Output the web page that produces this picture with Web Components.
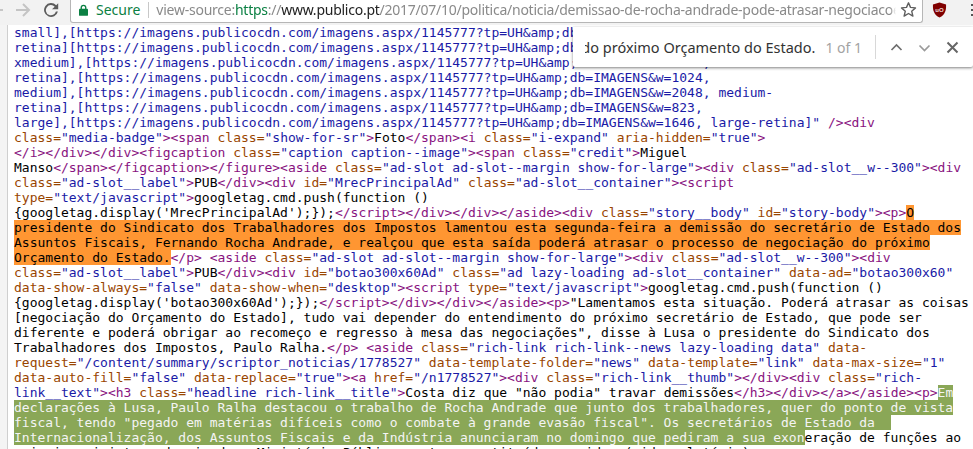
<!DOCTYPE html>
<html>
<head>
<meta charset="utf-8">
<title>view-source</title>
<style>
html, body { margin: 0; padding: 0; height: 100%; overflow: hidden; background: #fff; }
body { display: flex; flex-direction: column; height: 449px; }
</style>
</head>
<body>
<browser-toolbar url-scheme="view-source:" url-secure="https" url-path="/2017/07/10/politica/noticia/demissao-de-rocha-andrade-pode-atrasar-negociacoes"></browser-toolbar>
<source-view></source-view>
<find-bar query="do próximo Orçamento do Estado." count="1 of 1"></find-bar>

<script>
class BrowserToolbar extends HTMLElement {
    constructor() {
        super();
        this.attachShadow({ mode: 'open' });
        const CSS = `
        :host {
            display: flex;
            flex: none;
            height: 28px;
            box-sizing: border-box;
            background: #f2f2f2;
            border-bottom: 1px solid #b9b9b9;
            font-family: "Noto Sans", "Open Sans", sans-serif;
        }
        .nav {
            width: 70px;
            flex: none;
            display: flex;
            align-items: center;
            gap: 12px;
            padding: 0 0 7px 0;
            box-sizing: border-box;
        }
        .omnibox {
            flex: none;
            width: 853px;
            height: 23px;
            box-sizing: border-box;
            background: #fff;
            border: 1px solid #b6b6b6;
            border-top: 0;
            border-radius: 0 0 3px 3px;
            display: flex;
            align-items: center;
            padding: 0 0 3px 8px;
            font-size: 14px;
            white-space: nowrap;
            overflow: hidden;
        }
        .secure { color: #0b8043; margin-left: 8px; font-size: 14px; }
        .sep { width: 1px; height: 16px; background: #c8c8c8; margin: 0 7px 0 8px; flex: none; }
        .url { flex: 1; overflow: hidden; color: #8a8a8a; letter-spacing: -.25px; -webkit-mask-image: linear-gradient(to left, transparent 0, #000 6px); }
        .scheme { color: #0b8043; }
        .host { color: #222; }
        .star { flex: none; margin: 0 5px 0 4px; }
        .ext { flex: 1; display: flex; align-items: center; justify-content: space-between; padding: 0 0 7px 9px; }
        .dots { width: 2px; height: 2px; background: #555; box-shadow: 0 -5px #555, 0 5px #555; }
        `;
        this.shadowRoot.innerHTML = `
        <style>${CSS}</style>
        <div class="nav">
            <svg width="3" height="16" viewBox="0 0 3 16" fill="none" stroke="#c6c6c6" stroke-width="2"><path d="M0 8h3"/></svg>
            <svg width="16" height="16" viewBox="0 0 16 16" fill="none" stroke="#c4c4c4" stroke-width="2"><path d="M1 8h13M8 2l6 6-6 6"/></svg>
            <svg width="16" height="16" viewBox="0 0 16 16"><path d="M13.200 3.200A7 7 0 1 0 14.900 9.500h-2a5.100 5.100 0 1 1-1.200-4.800L9 7.300h6.200V1.200z" fill="#5c5c5c"/></svg>
        </div>
        <div class="omnibox">
            <svg width="9" height="12" viewBox="0 0 10 13" style="flex:none"><path d="M2.500 6V3.800a2.500 2.500 0 0 1 5 0V6" fill="none" stroke="#0b8043" stroke-width="1.500"/><rect x="0" y="5" width="10" height="8" rx="1" fill="#0b8043"/></svg>
            <span class="secure">Secure</span>
            <span class="sep"></span>
            <span class="url">${this.getAttribute('url-scheme')}<span class="scheme">${this.getAttribute('url-secure')}</span>://<span class="host">www.publico.pt</span>${this.getAttribute('url-path')}</span>
            <svg class="star" width="17" height="17" viewBox="0 0 17 17"><path d="M8.500 1.800l2 4.600 5 .5-3.800 3.300 1.200 4.900-4.400-2.600-4.400 2.600 1.200-4.900L1.500 6.900l5-.5z" fill="none" stroke="#5f5f5f" stroke-width="1.400" stroke-linejoin="round"/></svg>
        </div>
        <div class="ext">
            <svg width="15" height="16" viewBox="0 0 16 17"><path d="M8 .5 15 2.500c.3 6-1 11-7 14-6-3-7.300-8-7-14z" fill="#800000"/><text x="8" y="10.500" font-size="6.500" font-family="Liberation Sans, sans-serif" font-weight="700" fill="#e9d9d9" text-anchor="middle">uO</text></svg>
            <span class="dots"></span>
        </div>`;
    }
}
customElements.define('browser-toolbar', BrowserToolbar);

const SOURCE_LINES = [
'small],[https://imagens.publicocdn.com/imagens.aspx/1145777?tp=UH&amp;db=IMAGENS&w=512,',
'retina][https://imagens.publicocdn.com/imagens.aspx/1145777?tp=UH&amp;db=IMAGENS&w=1024,',
'xmedium],[https://imagens.publicocdn.com/imagens.aspx/1145777?tp=UH&amp;db=IMAGENS&w=640,',
'retina],[https://imagens.publicocdn.com/imagens.aspx/1145777?tp=UH&amp;db=IMAGENS&w=1024,',
'medium],[https://imagens.publicocdn.com/imagens.aspx/1145777?tp=UH&amp;db=IMAGENS&w=2048, medium-',
'retina],[https://imagens.publicocdn.com/imagens.aspx/1145777?tp=UH&amp;db=IMAGENS&w=823,',
'large],[https://imagens.publicocdn.com/imagens.aspx/1145777?tp=UH&amp;db=IMAGENS&w=1646, large-retina]" /><div',
'class="media-badge"><span class="show-for-sr">Foto</span><i class="i-expand" aria-hidden="true">',
'</i></div></div><figcaption class="caption caption--image"><span class="credit">Miguel',
'Manso</span></figcaption></figure><aside class="ad-slot ad-slot--margin show-for-large"><div class="ad-slot__w--300"><div',
'class="ad-slot__label">PUB</div><div id="MrecPrincipalAd" class="ad-slot__container"><script',
'type="text/javascript">googletag.cmd.push(function ()',
'{googletag.display(\'MrecPrincipalAd\');});<\/script></div></div></aside><div class="story__body" id="story-body"><p>{{O',
'presidente do Sindicato dos Trabalhadores dos Impostos lamentou esta segunda-feira a demissão do secretário de Estado dos',
'Assuntos Fiscais, Fernando Rocha Andrade, e realçou que esta saída poderá atrasar o processo de negociação do próximo',
'Orçamento do Estado.}}</p> <aside class="ad-slot ad-slot--margin show-for-large"><div class="ad-slot__w--300"><div',
'class="ad-slot__label">PUB</div><div id="botao300x60Ad" class="ad lazy-loading ad-slot__container" data-ad="botao300x60"',
'data-show-always="false" data-show-when="desktop"><script type="text/javascript">googletag.cmd.push(function ()',
'{googletag.display(\'botao300x60Ad\');});<\/script></div></div></aside><p>"Lamentamos esta situação. Poderá atrasar as coisas',
'[negociação do Orçamento do Estado], tudo vai depender do entendimento do próximo secretário de Estado, que pode ser',
'diferente e poderá obrigar ao recomeço e regresso à mesa das negociações", disse à Lusa o presidente do Sindicato dos',
'Trabalhadores dos Impostos, Paulo Ralha.</p> <aside class="rich-link rich-link--news lazy-loading data" data-',
'request="/content/summary/scriptor_noticias/1778527" data-template-folder="news" data-template="link" data-max-size="1"',
'data-auto-fill="false" data-replace="true"><a href="/n1778527"><div class="rich-link__thumb"></div><div class="rich-',
'link__text"><h3 class="headline rich-link__title">Costa diz que "não podia" travar demissões</h3></div></a></aside><p>[[Em',
'declarações à Lusa, Paulo Ralha destacou o trabalho de Rocha Andrade que junto dos trabalhadores, quer do ponto de vista',
'fiscal, tendo "pegado em matérias difíceis como o combate à grande evasão fiscal". Os secretários de Estado da  ',
'Internacionalização, dos Assuntos Fiscais e da Indústria anunciaram no domingo que pediram a sua exon]]eração de funções ao',
'primeiro-ministro, depois de o Ministério Público os ter constituído arguidos (vide relatório).'
];

class SourceView extends HTMLElement {
    constructor() {
        super();
        this.attachShadow({ mode: 'open' });
        const CSS = `
        :host {
            display: block;
            flex: 1;
            margin: -3px 0 0 7px;
            overflow: hidden;
            background: #fff;
            border-left: 1px solid #cfcfcf;
            box-shadow: -7px 0 0 #f4f4f4;
            font: 13px/15px "DejaVu Sans Mono", monospace;
            color: #000;
        }
        .line { display: block; height: 15px; padding-left: 6px; white-space: pre; width: max-content; }
        .tag { color: #881280; }
        .attr { color: #994500; }
        .val { color: #1a1aa6; }
        .o { background: #ff9632; }
        .g { background: #8aa757; color: #f4f4f4; }
        `;
        this.shadowRoot.innerHTML = `<style>${CSS}</style><div class="code"></div>`;
        this.render();
    }

    // walks the source like an html tokenizer, state carries across lines
    render() {
        const code = this.shadowRoot.querySelector('.code');
        let state = 'val';
        let mark = '';
        for (const raw of SOURCE_LINES) {
            const line = document.createElement('span');
            line.className = 'line';
            let run = '';
            let runClass = '';
            const flush = () => {
                if (!run) return;
                const s = document.createElement('span');
                s.className = (mark === 'g' ? '' : runClass) + ' ' + mark;
                s.textContent = run;
                line.appendChild(s);
                run = '';
            };
            const put = (ch, cls) => {
                if (cls !== runClass) { flush(); runClass = cls; }
                run += ch;
            };
            for (let i = 0; i < raw.length; i++) {
                const ch = raw[i];
                const two = raw.substr(i, 2);
                if (two === '{{' || two === '[[') { flush(); mark = two === '{{' ? 'o' : 'g'; i++; continue; }
                if (two === '}}' || two === ']]') { flush(); mark = ''; i++; continue; }
                if (state === 'text') {
                    if (ch === '<') { state = 'tag'; put(ch, 'tag'); }
                    else put(ch, '');
                } else if (state === 'tag') {
                    if (ch === '>') { put(ch, 'tag'); state = 'text'; }
                    else if (ch === ' ') { put(ch, 'tag'); state = 'inner'; }
                    else put(ch, 'tag');
                } else if (state === 'inner') {
                    if (ch === '>' || ch === '/') { put(ch, 'tag'); if (ch === '>') state = 'text'; }
                    else if (ch === '"') { state = 'val'; put(ch, 'val'); }
                    else put(ch, ch === ' ' ? runClass : 'attr');
                } else if (state === 'val') {
                    put(ch, 'val');
                    if (ch === '"') state = 'inner';
                }
            }
            flush();
            // a wrapped tag name continues with attributes on the next line
            if (state === 'tag') state = 'inner';
            code.appendChild(line);
        }
    }
}
customElements.define('source-view', SourceView);

class FindBar extends HTMLElement {
    constructor() {
        super();
        this.attachShadow({ mode: 'open' });
        const CSS = `
        :host {
            display: flex;
            align-items: center;
            position: absolute;
            top: 27px;
            right: 0;
            width: 400px;
            height: 40px;
            box-sizing: border-box;
            background: #fff;
            border-radius: 0 0 2px 2px;
            box-shadow: 0 1px 3px rgba(0,0,0,.5);
            font: 14px "Noto Sans", "Open Sans", sans-serif;
            color: #333;
            white-space: nowrap;
        }
        .query { flex: 1; min-width: 0; display: flex; justify-content: flex-end; overflow: hidden; margin-left: 12px; font-size: 14.500px; }
        .count { color: #a3a3a3; margin: 0 13px 0 10px; }
        .sep { width: 1px; height: 24px; background: #d8d8d8; flex: none; }
        .btns { display: flex; align-items: center; gap: 13px; padding: 0 13px 0 13px; }
        `;
        this.shadowRoot.innerHTML = `
        <style>${CSS}</style>
        <span class="query">${this.getAttribute('query')}</span>
        <span class="count">${this.getAttribute('count')}</span>
        <span class="sep"></span>
        <div class="btns">
            <svg width="15" height="15" viewBox="0 0 15 15" fill="none" stroke="#6e6e6e" stroke-width="1.700"><path d="M2.500 10 7.500 5l5 5"/></svg>
            <svg width="15" height="15" viewBox="0 0 15 15" fill="none" stroke="#9a9a9a" stroke-width="1.700"><path d="M2.500 5.500 7.500 10.500l5-5"/></svg>
            <svg width="15" height="15" viewBox="0 0 15 15" fill="none" stroke="#666" stroke-width="2"><path d="M2.500 2.500l10 10M12.500 2.500l-10 10"/></svg>
        </div>`;
    }
}
customElements.define('find-bar', FindBar);
</script>
</body>
</html>
